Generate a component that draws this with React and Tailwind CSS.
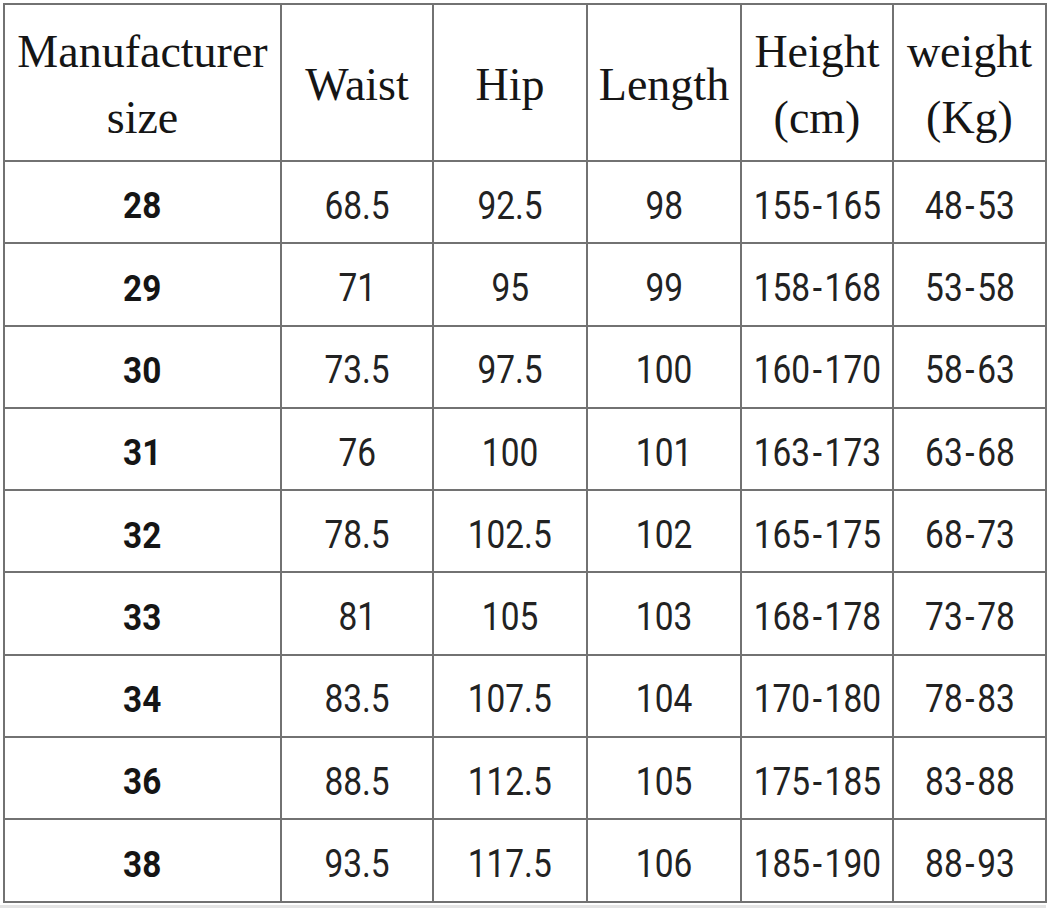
import React from 'react';

const HEADERS = [
  ['Manufacturer', 'size'],
  ['Waist'],
  ['Hip'],
  ['Length'],
  ['Height', '(cm)'],
  ['weight', '(Kg)'],
];

const ROWS = [
  ['28', '68.5', '92.5', '98', '155-165', '48-53'],
  ['29', '71', '95', '99', '158-168', '53-58'],
  ['30', '73.5', '97.5', '100', '160-170', '58-63'],
  ['31', '76', '100', '101', '163-173', '63-68'],
  ['32', '78.5', '102.5', '102', '165-175', '68-73'],
  ['33', '81', '105', '103', '168-178', '73-78'],
  ['34', '83.5', '107.5', '104', '170-180', '78-83'],
  ['36', '88.5', '112.5', '105', '175-185', '83-88'],
  ['38', '93.5', '117.5', '106', '185-190', '88-93'],
];

const cell = 'flex items-center justify-center border-r-2 border-b-2 border-[#727272] text-[#151515]';

const Value = ({ v }) => {
  const parts = v.split('-');
  if (parts.length < 2) return v;
  return (
    <>
      {parts[0]}
      <span className="px-[3px]">-</span>
      {parts[1]}
    </>
  );
};

export default function App() {
  return (
    <div className="w-[1050px] h-[910px] bg-white overflow-hidden">
      <div className="pl-[3px] pt-[3px]">
        {/* size chart */}
        <div className="grid grid-cols-[277px_152px_154px_154px_152px_153px] grid-rows-[157px_repeat(9,82.3px)] w-fit border-l-2 border-t-2 border-[#727272]">
          {HEADERS.map((lines, i) => (
            <div key={i} className={`${cell} flex-col text-[46px] leading-[66px] font-['Liberation_Serif',serif] pt-[4px]`}>
              {lines.map((l) => (
                <span key={l} className="whitespace-nowrap">{l}</span>
              ))}
            </div>
          ))}
          {ROWS.map((row, r) =>
            row.map((v, c) => (
              <div key={`${r}-${c}`} className={`${cell} pt-[8px] font-['Roboto',sans-serif]`}>
                <span
                  className={`whitespace-nowrap inline-block ${
                    c === 0 ? 'font-bold text-[37px] scale-x-[0.9]' : 'text-[38px] scale-x-[0.88] text-[#222]'
                  }`}
                >
                  <Value v={v} />
                </span>
              </div>
            ))
          )}
        </div>
        <div className="mt-[2px] h-[3px] w-[1046px] -ml-[3px] bg-[#e4e4e4]" />
      </div>
    </div>
  );
}
